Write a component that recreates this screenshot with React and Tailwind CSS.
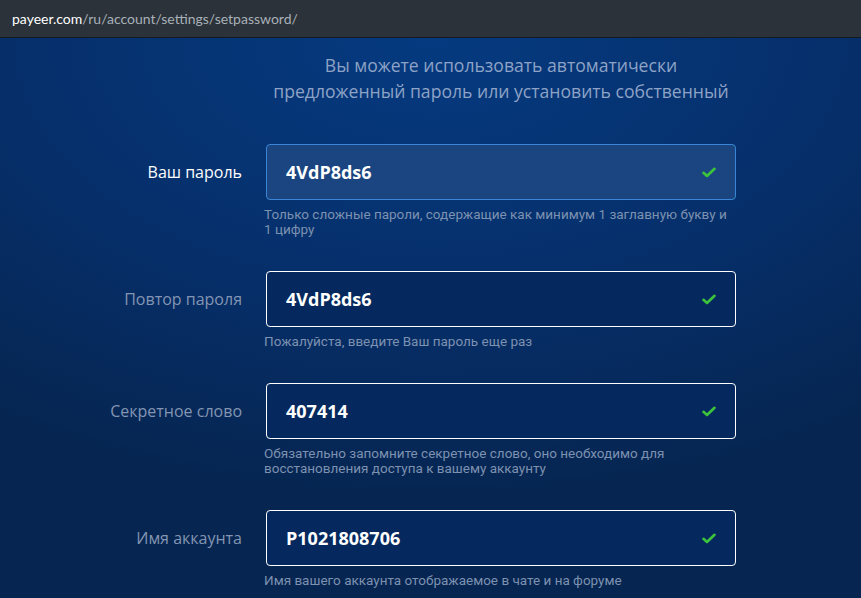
import React from 'react';

const rows = [
  {
    label: 'Ваш пароль',
    value: '4VdP8ds6',
    hint: ['Только сложные пароли, содержащие как минимум 1 заглавную букву и', '1 цифру'],
    active: true
  },
  {
    label: 'Повтор пароля',
    value: '4VdP8ds6',
    hint: ['Пожалуйста, введите Ваш пароль еще раз']
  },
  {
    label: 'Секретное слово',
    value: '407414',
    hint: ['Обязательно запомните секретное слово, оно необходимо для', 'восстановления доступа к вашему аккаунту']
  },
  {
    label: 'Имя аккаунта',
    value: 'P1021808706',
    hint: ['Имя вашего аккаунта отображаемое в чате и на форуме']
  }
];

const Check = () => (
  <svg width="14" height="11" viewBox="0 0 14 11" className="shrink-0">
    <path d="M1.5 5.8 L5 9 L12.5 1.8" fill="none" stroke="#3cc43c" strokeWidth="2.6" strokeLinecap="round" strokeLinejoin="round" />
  </svg>
);

const Field = ({ row }) => (
  <div className="contents">
    <div className={`h-14 flex items-center justify-end text-[16px] ${row.active ? 'text-white' : 'text-[#8395b2]'}`}>
      {row.label}
    </div>
    <div>
      <div
        className={`h-14 rounded-[4px] border flex items-center pl-[19px] pr-[19px] ${
          row.active ? 'bg-[#1a4580] border-[#3a86d6]' : 'bg-[#05295e] border-white'
        }`}
      >
        <span className="flex-1 text-white font-bold text-[18px]">{row.value}</span>
        <Check />
      </div>
      <p className="mt-[7px] mb-[34px] -ml-[2px] text-[13.5px] leading-[15px] text-[#7d91b0] whitespace-nowrap" style={{ fontFamily: 'Roboto, sans-serif' }}>
        {row.hint.map((l, i) => (
          <span key={i} className="block">{l}</span>
        ))}
      </p>
    </div>
  </div>
);

export default function App() {
  return (
    <div className="w-[861px] h-[598px] overflow-hidden flex flex-col" style={{ fontFamily: '"Open Sans", "Liberation Sans", sans-serif' }}>
      <div className="h-[38px] shrink-0 bg-[#2b3239] border-b border-[#151a20] flex items-center pl-[12px] text-[14px]" style={{ fontFamily: 'Lato, sans-serif' }}>
        <span className="text-white">payeer.com</span>
        <span className="text-[#a8b0b8]">/ru/account/settings/setpassword/</span>
      </div>
      <div className="flex-1 bg-[radial-gradient(ellipse_90%_80%_at_50%_0%,#053a80_0%,#062f6a_55%,#062550_100%)]">
        <div className="grid grid-cols-[242px_470px] gap-x-6 pt-[14px]">
          <div />
          <h2 className="text-center text-[17.6px] leading-[26px] text-[#8ea3c6] mb-[40px]">
            Вы можете использовать автоматически<br />
            предложенный пароль или установить собственный
          </h2>
          {rows.map((r) => (
            <Field key={r.label} row={r} />
          ))}
        </div>
      </div>
    </div>
  );
}
